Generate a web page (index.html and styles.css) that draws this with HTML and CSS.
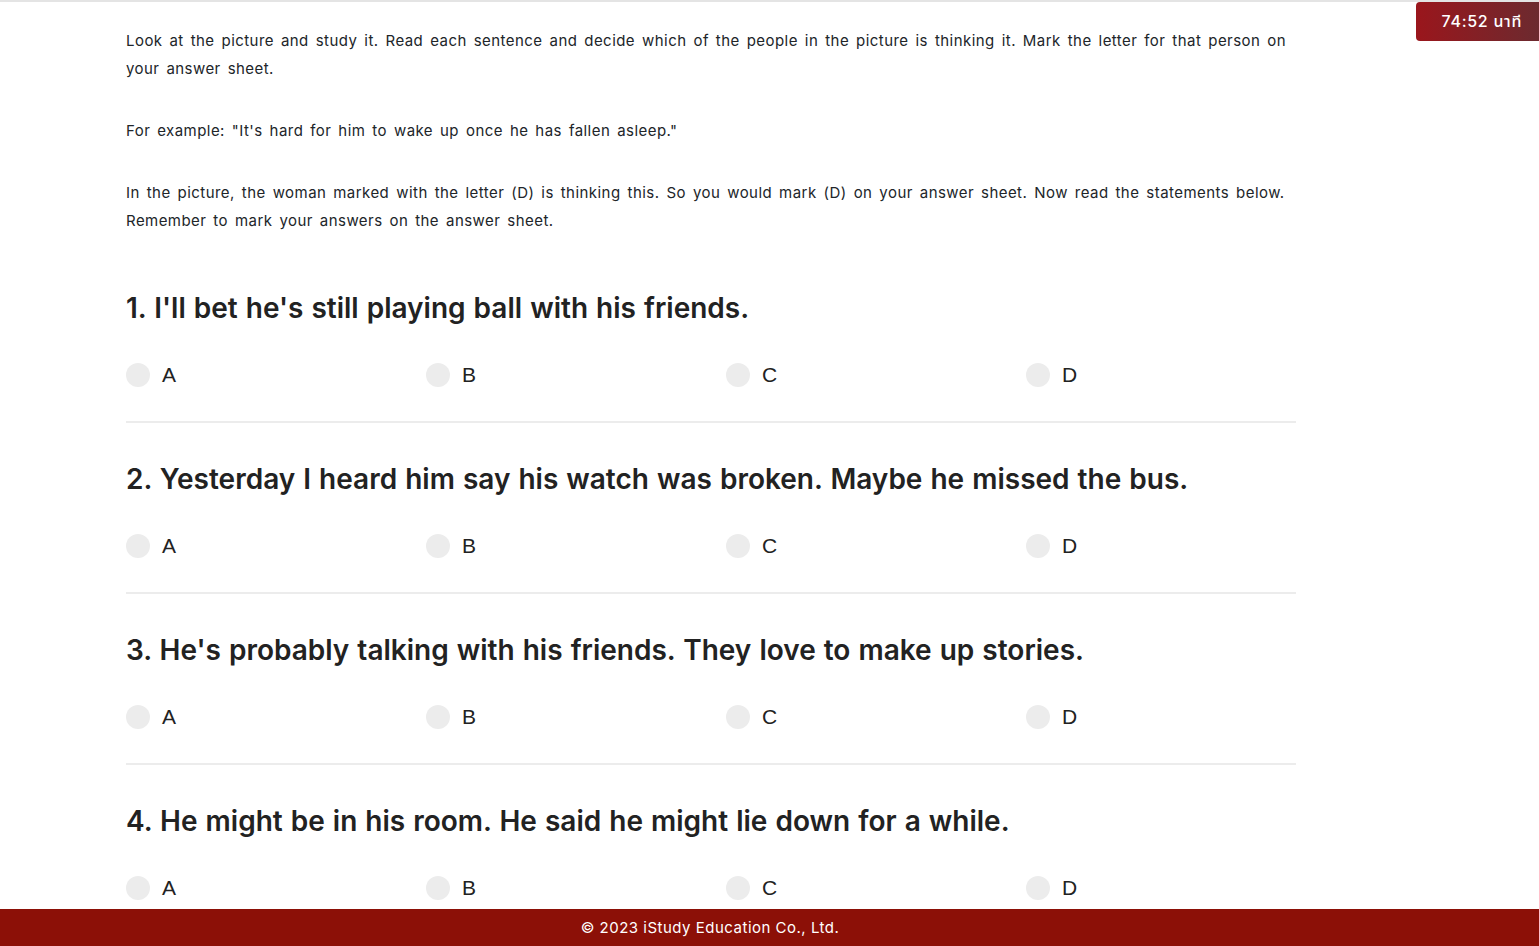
FILE: index.html
```html
<!DOCTYPE html>
<html lang="en">
<head>
<meta charset="utf-8">
<title>Exam</title>
<link rel="stylesheet" href="styles.css">
</head>
<body>
<div class="timer">74:52 นาที</div>
<main class="content">
  <section class="intro">
    <p>Look at the picture and study it. Read each sentence and decide which of the people in the picture is thinking it. Mark the letter for that person on your answer sheet.</p>
    <p>For example: "It's hard for him to wake up once he has fallen asleep."</p>
    <p>In the picture, the woman marked with the letter (D) is thinking this. So you would mark (D) on your answer sheet. Now read the statements below. Remember to mark your answers on the answer sheet.</p>
  </section>

  <section class="question">
    <h2 class="q-title">1. I'll bet he's still playing ball with his friends.</h2>
    <div class="options">
      <label class="option"><span class="radio"></span><span class="letter">A</span></label>
      <label class="option"><span class="radio"></span><span class="letter">B</span></label>
      <label class="option"><span class="radio"></span><span class="letter">C</span></label>
      <label class="option"><span class="radio"></span><span class="letter">D</span></label>
    </div>
  </section>

  <section class="question">
    <h2 class="q-title">2. Yesterday I heard him say his watch was broken. Maybe he missed the bus.</h2>
    <div class="options">
      <label class="option"><span class="radio"></span><span class="letter">A</span></label>
      <label class="option"><span class="radio"></span><span class="letter">B</span></label>
      <label class="option"><span class="radio"></span><span class="letter">C</span></label>
      <label class="option"><span class="radio"></span><span class="letter">D</span></label>
    </div>
  </section>

  <section class="question">
    <h2 class="q-title">3. He's probably talking with his friends. They love to make up stories.</h2>
    <div class="options">
      <label class="option"><span class="radio"></span><span class="letter">A</span></label>
      <label class="option"><span class="radio"></span><span class="letter">B</span></label>
      <label class="option"><span class="radio"></span><span class="letter">C</span></label>
      <label class="option"><span class="radio"></span><span class="letter">D</span></label>
    </div>
  </section>

  <section class="question">
    <h2 class="q-title">4. He might be in his room. He said he might lie down for a while.</h2>
    <div class="options">
      <label class="option"><span class="radio"></span><span class="letter">A</span></label>
      <label class="option"><span class="radio"></span><span class="letter">B</span></label>
      <label class="option"><span class="radio"></span><span class="letter">C</span></label>
      <label class="option"><span class="radio"></span><span class="letter">D</span></label>
    </div>
  </section>
</main>
<footer class="footer"><span class="footer-text">© 2023 iStudy Education Co., Ltd.</span></footer>
</body>
</html>
```

FILE: styles.css
```css
html, body {
  margin: 0;
  padding: 0;
  height: 100%;
  overflow: hidden;
}
body {
  border-top: 2px solid #e4e4e4;
  font-family: Inter, "Noto Sans", "Liberation Sans", sans-serif;
  color: #212529;
  background: #fff;
}
.timer {
  position: absolute;
  top: 2px;
  right: 0;
  height: 39px;
  line-height: 39px;
  padding: 0 17px 0 26px;
  background: linear-gradient(90deg, #9a161c 0%, #6c2a2f 100%);
  color: #fff;
  font-size: 16px;
  font-weight: 500;
  letter-spacing: 0.7px;
  border-radius: 4px 0 0 4px;
  font-family: Inter, "Noto Sans", "Noto Sans Thai", sans-serif;
}
.content {
  width: 1170px;
  padding: 25px 0 0 126px;
}
.intro p {
  margin: 0 0 34px;
  font-size: 15px;
  line-height: 28px;
  letter-spacing: 0.45px;
  word-spacing: 2.3px;
  padding-right: 4px;
}
.intro p:last-child {
  margin-bottom: 53px;
}
.question {
  padding-bottom: 34px;
  border-bottom: 2px solid #ececec;
  margin-bottom: 36px;
}
.q-title {
  margin: 0 0 34px;
  font-size: 28px;
  line-height: 40px;
  font-weight: 600;
  color: #222;
  letter-spacing: 0;
  word-spacing: 1px;
}
.options {
  display: grid;
  grid-template-columns: repeat(4, 300px);
}
.option {
  display: flex;
  align-items: center;
  gap: 12px;
  height: 24px;
  margin-top: 1px;
}
.radio {
  width: 24px;
  height: 24px;
  border-radius: 50%;
  background: #ececec;
}
.letter {
  font-family: "Liberation Sans", Arial, sans-serif;
  font-size: 21px;
  color: #222;
}
.footer {
  position: fixed;
  left: 0;
  right: 0;
  bottom: 0;
  height: 37px;
  background: #8c1007;
  display: flex;
  align-items: center;
  justify-content: center;
  padding-right: 119px;
}
.footer-text {
  color: #fff;
  font-size: 15px;
  letter-spacing: 0.5px;
}
```
